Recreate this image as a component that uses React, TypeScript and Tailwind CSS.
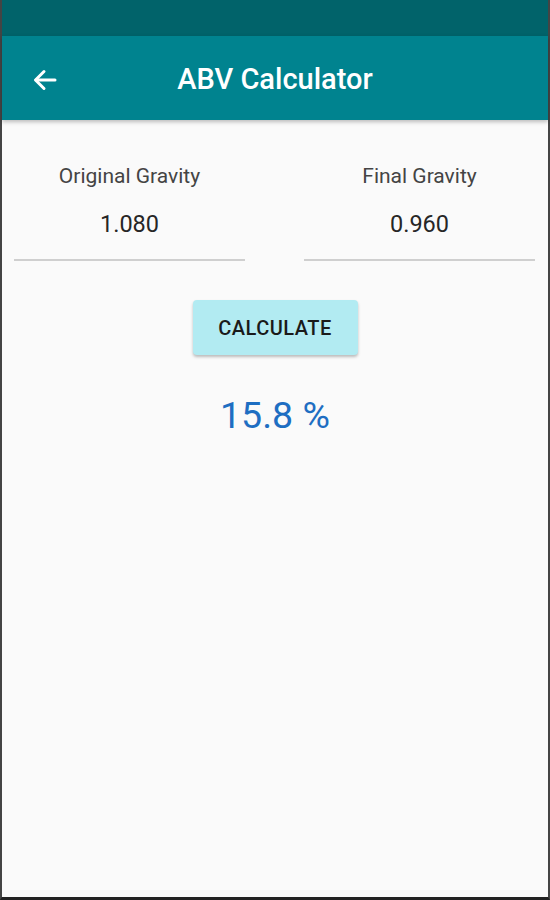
import React from "react";

const Field: React.FC<{ label: string; value: string }> = ({ label, value }) => (
  <div className="flex w-[231px] flex-col items-center">
    <span className="mt-[42px] text-[21px] leading-[28px] text-[#444]">{label}</span>
    <span className="mt-[19px] text-[23.5px] leading-[30px] text-[#262626]">{value}</span>
    <div className="mt-[20px] h-[2px] w-full bg-[#cfcfcf]" />
  </div>
);

const App: React.FC = () => {
  return (
    <div className="flex h-[900px] w-[550px] flex-col border-x-2 border-b-[3px] border-x-[#444] border-b-[#222] bg-[#fafafa] font-['Roboto',sans-serif]">
      <div className="h-[36px] bg-[#01636a]" />
      <div className="relative flex h-[84px] items-center justify-center bg-[#00838f] pt-[4px] shadow-[0_2px_4px_rgba(0,0,0,0.25)]">
        <button className="absolute left-[30px] top-[32px] text-white">
          <svg width="26" height="24" viewBox="0 0 26 24" fill="none" stroke="white" strokeWidth="3" strokeLinecap="round" strokeLinejoin="round">
            <path d="M23 12H4" />
            <path d="M12 3.5L3.5 12L12 20.5" />
          </svg>
        </button>
        <h1 className="text-[29px] font-medium text-white">ABV Calculator</h1>
      </div>
      <div className="flex flex-col items-center">
        <div className="flex w-full justify-between pl-[12px] pr-[13px]">
          <Field label="Original Gravity" value="1.080" />
          <Field label="Final Gravity" value="0.960" />
        </div>
        <button className="mt-[39px] h-[55px] w-[165px] rounded-[4px] bg-[#b2ebf2] text-[20px] font-medium tracking-[0.5px] text-[#1a1a1a] shadow-[0_2px_3px_rgba(0,0,0,0.25)]">
          CALCULATE
        </button>
        <div className="mt-[36px] text-[37.5px] leading-[48px] text-[#1e6ec2]">15.8 %</div>
      </div>
    </div>
  );
};

export default App;
